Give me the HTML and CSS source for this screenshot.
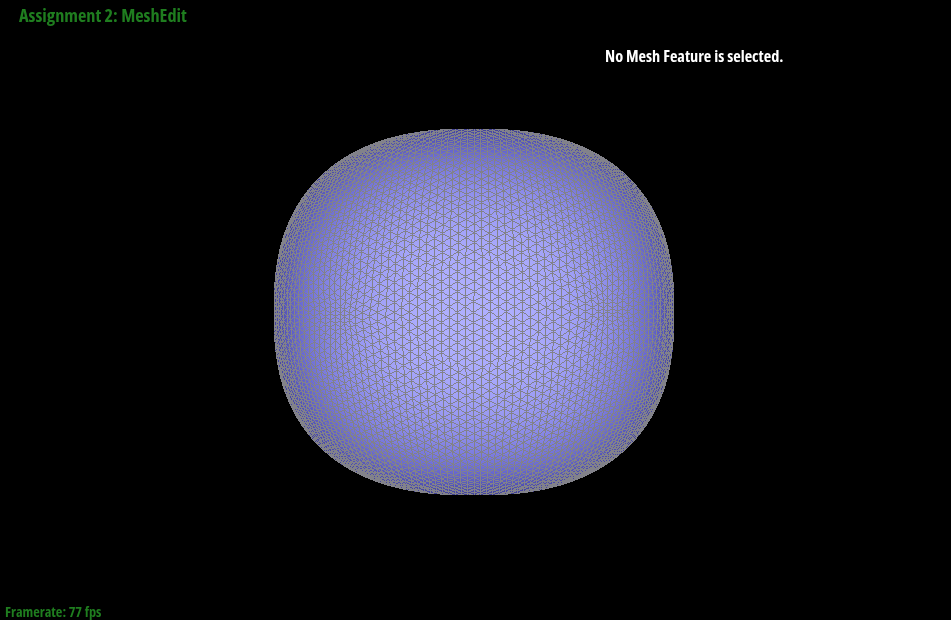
FILE: index.html
```html
<!DOCTYPE html>
<html lang="en">
<head>
<meta charset="utf-8">
<title>Assignment 2: MeshEdit</title>
<link rel="stylesheet" href="styles.css">
</head>
<body>
<main class="viewport">
  <canvas id="mesh" class="mesh" width="951" height="620"></canvas>
  <div class="hud">
    <header class="hud-top">
      <h1 class="title">Assignment 2: MeshEdit</h1>
      <p class="status">No Mesh Feature is selected.</p>
    </header>
    <footer class="framerate">Framerate: 77 fps</footer>
  </div>
</main>
<script src="app.js"></script>
</body>
</html>
```
FILE: styles.css
```css
html, body { margin: 0; padding: 0; background: #000; }
.viewport { display: grid; width: 951px; height: 620px; overflow: hidden; background: #000; }
.mesh, .hud { grid-area: 1 / 1; }
.mesh { display: block; }
.hud {
  display: flex; flex-direction: column; justify-content: space-between;
  font-family: "Open Sans", "Noto Sans", sans-serif; font-weight: 700; font-stretch: 75%;
}
.hud-top { display: flex; align-items: flex-start; padding: 3px 0 0 19px; }
.title { margin: 0; font-size: 18.3px; line-height: 24px; font-weight: 700; color: #1f7d1f; width: 586px; }
.status { margin: 41px 0 0; font-size: 16.3px; line-height: 24px; color: #fff; }
.framerate { padding: 2px 0 0 5px; font-size: 14.3px; line-height: 16px; color: #1f7d1f; }
```
FILE: app.js
```js
(function () {
  var W = 951, H = 620, CX = 473.5, CY = 311.5, RX = 200.5, RY = 183.5, P = 2.45;
  var POLES = [[342, 317], [606, 310]];
  var ctx = document.getElementById('mesh').getContext('2d');
  var img = ctx.createImageData(W, H), d = img.data;
  function put(x, y, r, g, b) {
    if (x < 0 || y < 0 || x >= W || y >= H) return;
    var i = (y * W + x) * 4;
    d[i] = r; d[i + 1] = g; d[i + 2] = b; d[i + 3] = 255;
  }
  function norm(x, y) {
    return Math.pow(Math.abs((x - CX) / RX), P) + Math.pow(Math.abs((y - CY) / RY), P);
  }
  // Lit fill of the rounded body.
  for (var y = 0; y < H; y++) for (var x = 0; x < W; x++) {
    d[(y * W + x) * 4 + 3] = 255;
    var s = norm(x, y);
    if (s > 1) continue;
    var l = Math.pow(1 - s, 0.75);
    put(x, y, Math.round(60 + 115 * l), Math.round(60 + 115 * l), Math.round(125 + 130 * Math.pow(l, 0.5)));
  }
  // Smooth square-to-superellipse projection of a lattice point given in angles,
  // pulled in a little around the two fan vertices of the mesh.
  function project(a, b) {
    var X = Math.sin(a), Y = Math.sin(b);
    var px = CX + RX * 1.02 * X * Math.sqrt(1 - 0.43 * Y * Y);
    var py = CY + RY * 1.02 * Y * Math.sqrt(1 - 0.43 * X * X);
    for (var n = 0; n < POLES.length; n++) {
      var dx = px - POLES[n][0], dy = py - POLES[n][1];
      var f = 1 - 0.3 * Math.exp(-(dx * dx + dy * dy) / 800);
      px = POLES[n][0] + dx * f;
      py = POLES[n][1] + dy * f;
    }
    return [px, py];
  }
  function line(p, q) {
    var x0 = Math.round(p[0]), y0 = Math.round(p[1]), x1 = Math.round(q[0]), y1 = Math.round(q[1]);
    var dx = Math.abs(x1 - x0), dy = -Math.abs(y1 - y0), sx = x0 < x1 ? 1 : -1, sy = y0 < y1 ? 1 : -1, e = dx + dy;
    for (;;) {
      if (norm(x0, y0) <= 1) put(x0, y0, 130, 130, 138);
      if (x0 === x1 && y0 === y1) break;
      var t = 2 * e;
      if (t >= dy) { e += dy; x0 += sx; }
      if (t <= dx) { e += dx; y0 += sy; }
    }
  }
  var DA = 8 / RX, DB = 10 / RY, MAX = Math.PI / 2 - 0.02;
  var NA = Math.floor(MAX / DA), NB = Math.floor(MAX / DB);
  function clampA(v) { return Math.max(-MAX, Math.min(MAX, v)); }
  function vert(i, j) {
    return project(clampA(i * DA), clampA((j + (i & 1 ? 0.5 : 0)) * DB));
  }
  for (var i = -NA; i <= NA; i++) for (var j = -NB; j <= NB; j++) {
    var v = vert(i, j);
    if (j < NB) line(v, vert(i, j + 1));
    if (i < NA) {
      line(v, vert(i + 1, j));
      line(v, vert(i + 1, (i & 1) ? j + 1 : j - 1));
    }
  }
  ctx.putImageData(img, 0, 0);
})();
```
